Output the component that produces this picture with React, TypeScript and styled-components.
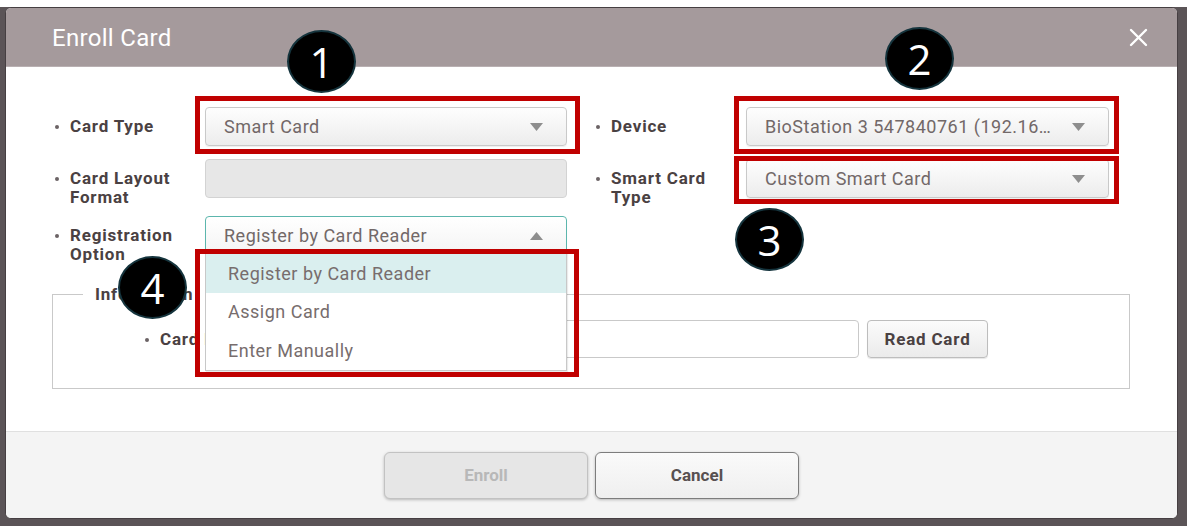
import React from 'react'
import styled, { createGlobalStyle } from 'styled-components'

const GlobalStyle = createGlobalStyle`
  html, body {
    margin: 0;
    padding: 0;
  }
  body {
    font-family: Roboto, "Liberation Sans", Arial, sans-serif;
    background: #fff;
  }
`

const Screen = styled.div`
  position: relative;
  width: 1187px;
  height: 526px;
  overflow: hidden;
  display: flex;
  flex-direction: column;
  background: #fff;
`

const Backdrop = styled.div`
  flex: 1;
  margin-top: 7px;
  padding: 0 9px 7px 5px;
  background: #5b5457;
  display: flex;
`

const Dialog = styled.div`
  width: 1173px;
  box-sizing: border-box;
  display: flex;
  flex-direction: column;
  border: 1px solid #463f42;
  border-radius: 6px;
  overflow: hidden;
  background: #fff;
`

const Header = styled.div`
  height: 58px;
  flex: none;
  display: flex;
  align-items: center;
  justify-content: space-between;
  padding: 0 29px 0 46px;
  background: #a59a9c;
  border-bottom: 1px solid #b9b0b2;
`

const Title = styled.div`
  color: #fff;
  font-size: 24px;
  letter-spacing: 0.3px;
  padding-top: 2px;
`

const CloseButton = styled.div`
  width: 19px;
  height: 19px;
  display: flex;
`

const Body = styled.div`
  flex: 1;
  padding: 40px 47px 0 46px;
`

const FormGrid = styled.div`
  margin-left: 3px;
  display: grid;
  grid-template-columns: 512px 513px;
  grid-template-rows: 52px 57px 48px;
  column-gap: 29px;
`

const Field = styled.div`
  display: flex;
  align-items: flex-start;
`

const Label = styled.div<{ $top?: number; $width?: number }>`
  flex: none;
  width: ${p => p.$width ?? 150}px;
  box-sizing: border-box;
  display: flex;
  align-items: flex-start;
  padding-top: ${p => p.$top ?? 10}px;
  font-size: 17px;
  line-height: 19px;
  letter-spacing: 0.8px;
  font-weight: 700;
  color: #4a4142;
  white-space: nowrap;

  &::before {
    content: '';
    flex: none;
    width: 4px;
    height: 4px;
    border-radius: 50%;
    background: #6b6365;
    margin: 8px 11px 0 0;
  }
`

const SelectWrap = styled.div`
  position: relative;
  flex: 1;
`

const Select = styled.div<{ $open?: boolean; $disabled?: boolean }>`
  height: 39px;
  box-sizing: border-box;
  display: flex;
  align-items: center;
  padding: 0 23px 0 18px;
  border: 1px solid ${p => (p.$open ? '#5cb6ad' : p.$disabled ? '#d3d3d3' : '#c9c9c9')};
  border-radius: ${p => (p.$open ? '4px 4px 0 0' : '4px')};
  background: ${p =>
    p.$disabled
      ? '#e7e7e7'
      : p.$open
        ? 'linear-gradient(#ffffff, #f4f4f4)'
        : 'linear-gradient(#fefefe, #ececec)'};
  box-shadow: ${p => (p.$disabled ? 'none' : '0 1px 1px rgba(0, 0, 0, 0.07)')};
  font-size: 18px;
  letter-spacing: 0.5px;
  color: #726868;
  white-space: nowrap;
`

const SelectText = styled.span`
  flex: 1;
  overflow: hidden;
`

const Arrow = styled.svg`
  flex: none;
  margin-left: 10px;
`

const Menu = styled.div`
  position: absolute;
  top: calc(100% - 2px);
  left: 0;
  right: 0;
  z-index: 2;
  background: #fff;
  border: 1px solid #c8c8c8;
  border-top: 1px solid #5cb6ad;
  box-shadow: 1px 1px 1px rgba(0, 0, 0, 0.08);
`

const MenuItem = styled.div<{ $active?: boolean }>`
  height: 38.5px;
  display: flex;
  align-items: center;
  padding-left: 22px;
  font-size: 18px;
  letter-spacing: 0.5px;
  color: #776d6d;
  background: ${p => (p.$active ? '#daefef' : '#fff')};
`

const Group = styled.fieldset`
  margin: 21px 0 0;
  padding: 16px 0 30px 0;
  min-width: 0;
  border: 1px solid #c9c9c9;
`

const Legend = styled.legend`
  margin-left: 30px;
  padding: 0 12px;
  font-size: 17px;
  line-height: 19px;
  letter-spacing: 0.8px;
  font-weight: 700;
  color: #4a4142;
`

const CardRow = styled.div`
  display: flex;
  align-items: center;
  padding-left: 92px;
`

const TextInput = styled.div`
  width: 559px;
  height: 38px;
  box-sizing: border-box;
  border: 1px solid #c9c9c9;
  border-radius: 4px;
  background: #fff;
`

const SmallButton = styled.div`
  margin-left: 8px;
  width: 121px;
  height: 38px;
  box-sizing: border-box;
  display: flex;
  align-items: center;
  justify-content: center;
  border: 1px solid #bdbdbd;
  border-radius: 4px;
  background: linear-gradient(#fbfbfb, #ebebeb);
  box-shadow: 0 1px 1px rgba(0, 0, 0, 0.1);
  font-size: 17px;
  letter-spacing: 0.8px;
  font-weight: 700;
  color: #4a4142;
`

const Footer = styled.div`
  height: 86px;
  flex: none;
  display: flex;
  align-items: center;
  justify-content: center;
  gap: 7px;
  border-top: 1px solid #e0e0e0;
  background: #f4f4f4;
`

const FooterButton = styled.div<{ $disabled?: boolean }>`
  width: 204px;
  height: 47px;
  box-sizing: border-box;
  display: flex;
  align-items: center;
  justify-content: center;
  border: 1px solid ${p => (p.$disabled ? '#c2c2c2' : '#7d7d7d')};
  border-radius: 6px;
  background: ${p => (p.$disabled ? '#e6e6e6' : 'linear-gradient(#fafafa, #efefef)')};
  box-shadow: 0 1px 3px rgba(0, 0, 0, 0.25);
  font-size: 17px;
  font-weight: 700;
  color: ${p => (p.$disabled ? '#b8b8b8' : '#585050')};
`

/* annotation layer drawn over the screenshot */
const RedBox = styled.div<{ $x: number; $y: number; $w: number; $h: number }>`
  position: absolute;
  left: ${p => p.$x}px;
  top: ${p => p.$y}px;
  width: ${p => p.$w}px;
  height: ${p => p.$h}px;
  box-sizing: border-box;
  border: 5px solid #c00000;
  z-index: 5;
`

const Badge = styled.div<{ $x: number; $y: number }>`
  position: absolute;
  left: ${p => p.$x}px;
  top: ${p => p.$y}px;
  width: 69px;
  height: 63px;
  box-sizing: border-box;
  border-radius: 50%;
  border: 2px solid #15343d;
  background: #000;
  color: #fff;
  display: flex;
  align-items: center;
  justify-content: center;
  font-family: "Open Sans", "DejaVu Sans", sans-serif;
  font-size: 42px;
  line-height: 1;
  z-index: 6;
`

function Caret({ up }: { up?: boolean }) {
  return (
    <Arrow width="13" height="8" viewBox="0 0 13 8">
      <path d={up ? 'M0 8 L6.5 0 L13 8 Z' : 'M0 0 L13 0 L6.5 8 Z'} fill="#8e8e8e" />
    </Arrow>
  )
}

function CloseIcon() {
  return (
    <svg width="19" height="19" viewBox="0 0 19 19">
      <path d="M2 2 L17 17 M17 2 L2 17" stroke="#fff" strokeWidth="2.4" strokeLinecap="round" />
    </svg>
  )
}

const registrationOptions = ['Register by Card Reader', 'Assign Card', 'Enter Manually']

export default function App() {
  return (
    <>
      <GlobalStyle />
      <Screen>
        <Backdrop>
          <Dialog>
            <Header>
              <Title>Enroll Card</Title>
              <CloseButton>
                <CloseIcon />
              </CloseButton>
            </Header>

            <Body>
              <FormGrid>
                <Field>
                  <Label>Card Type</Label>
                  <SelectWrap>
                    <Select>
                      <SelectText>Smart Card</SelectText>
                      <Caret />
                    </Select>
                  </SelectWrap>
                </Field>
                <Field>
                  <Label>Device</Label>
                  <SelectWrap>
                    <Select>
                      <SelectText>BioStation 3 547840761 (192.16…</SelectText>
                      <Caret />
                    </Select>
                  </SelectWrap>
                </Field>

                <Field>
                  <Label>
                    Card Layout
                    <br />
                    Format
                  </Label>
                  <SelectWrap>
                    <Select $disabled />
                  </SelectWrap>
                </Field>
                <Field>
                  <Label>
                    Smart Card
                    <br />
                    Type
                  </Label>
                  <SelectWrap>
                    <Select>
                      <SelectText>Custom Smart Card</SelectText>
                      <Caret />
                    </Select>
                  </SelectWrap>
                </Field>

                <Field>
                  <Label>
                    Registration
                    <br />
                    Option
                  </Label>
                  <SelectWrap>
                    <Select $open>
                      <SelectText>Register by Card Reader</SelectText>
                      <Caret up />
                    </Select>
                    <Menu>
                      {registrationOptions.map((opt, i) => (
                        <MenuItem key={opt} $active={i === 0}>
                          {opt}
                        </MenuItem>
                      ))}
                    </Menu>
                  </SelectWrap>
                </Field>
                <div />
              </FormGrid>

              <Group>
                <Legend>Information</Legend>
                <CardRow>
                  <Label $top={0} $width={155}>Card ID</Label>
                  <TextInput />
                  <SmallButton>Read Card</SmallButton>
                </CardRow>
              </Group>
            </Body>

            <Footer>
              <FooterButton $disabled>Enroll</FooterButton>
              <FooterButton>Cancel</FooterButton>
            </Footer>
          </Dialog>
        </Backdrop>

        <RedBox $x={195} $y={96} $w={385} $h={58} />
        <RedBox $x={734} $y={96} $w={385} $h={58} />
        <RedBox $x={734} $y={156} $w={385} $h={48} />
        <RedBox $x={195} $y={249} $w={384} $h={128} />

        <Badge $x={287} $y={30}>1</Badge>
        <Badge $x={885} $y={27}>2</Badge>
        <Badge $x={735} $y={208}>3</Badge>
        <Badge $x={118} $y={256}>4</Badge>
      </Screen>
    </>
  )
}
